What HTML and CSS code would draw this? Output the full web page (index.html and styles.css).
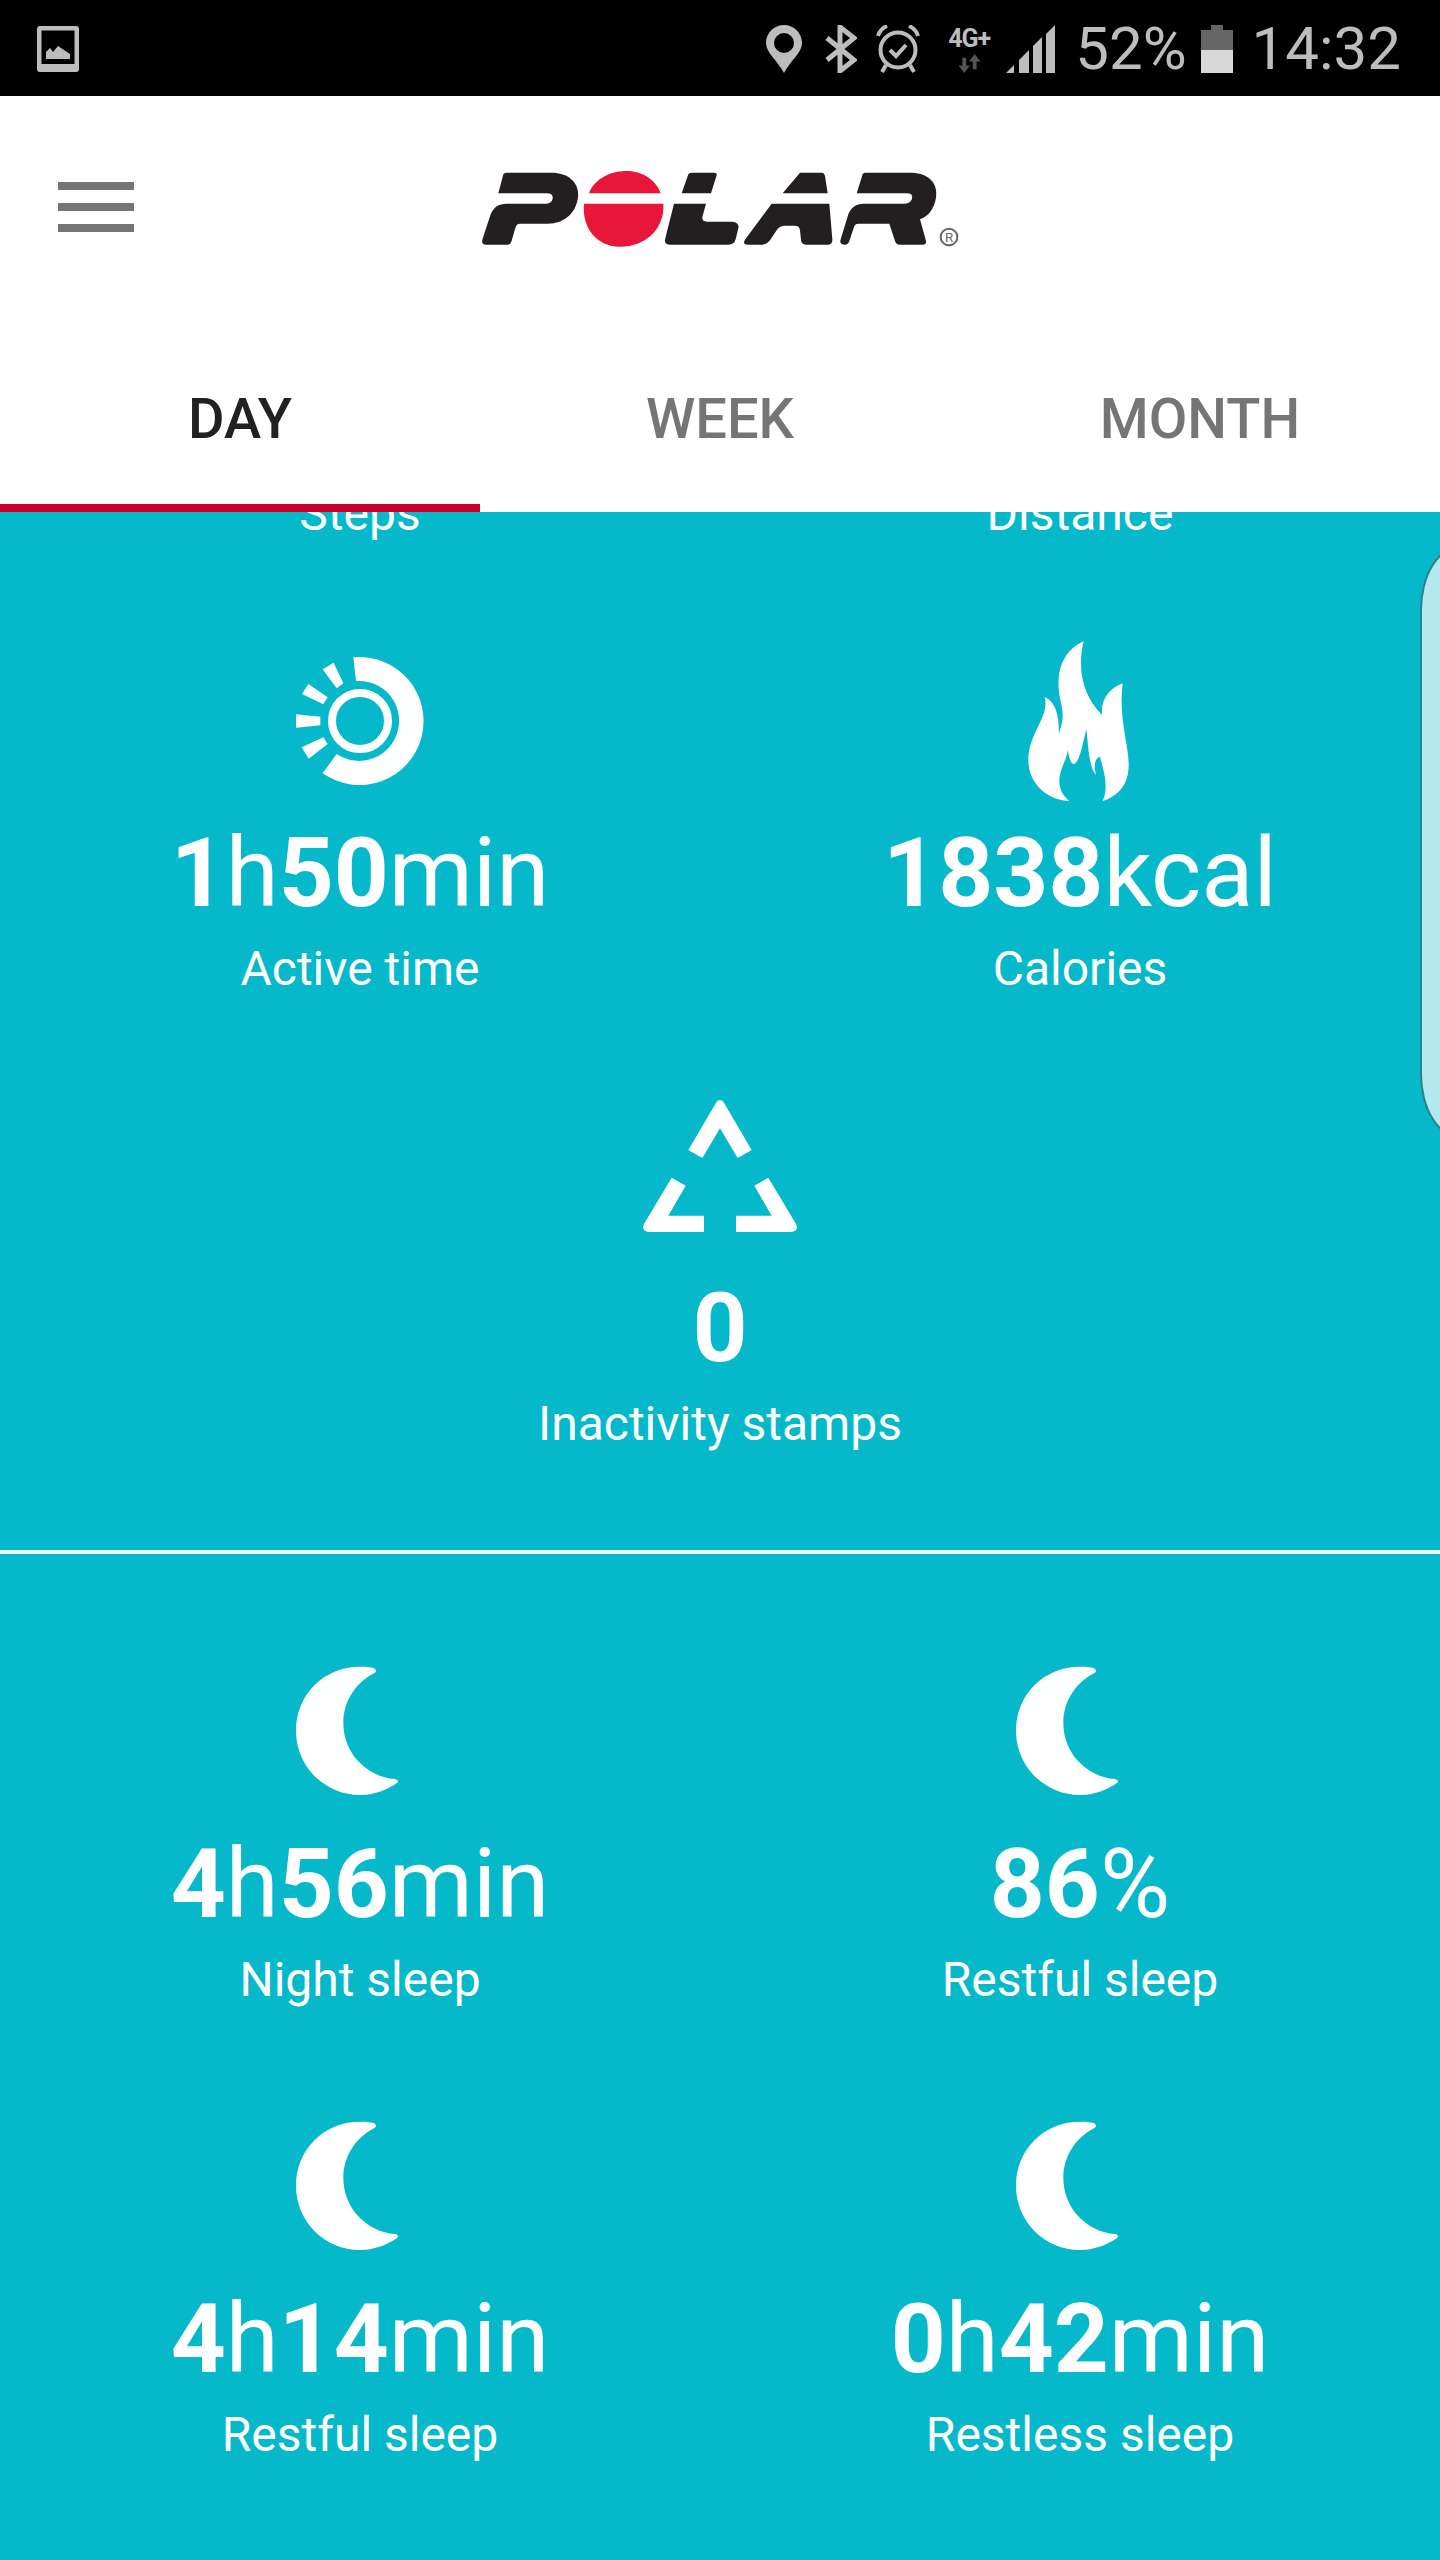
FILE: index.html
```html
<!DOCTYPE html>
<html lang="en">

<head>
    <meta charset="UTF-8">
    <title>Polar Flow</title>
    <link rel="stylesheet" href="styles.css">
</head>

<body>
    <div class="phone">
        <!-- status bar -->
        <div class="status">
            <svg class="st-photo" viewBox="0 0 42 46">
                <path fill-rule="evenodd" d="M3 0H39Q42 0 42 3V43Q42 46 39 46H3Q0 46 0 43V3Q0 0 3 0ZM4.500 4.500V38H37.500V4.500ZM9 33V26L13 22L16 26L21 20L33 28V33Z" />
            </svg>
            <div class="st-right">
                <svg class="st-pin" viewBox="0 0 36 48">
                    <path fill-rule="evenodd" d="M18 0C8 0 0 8 0 18C0 28 12 36 18 48C24 36 36 28 36 18C36 8 28 0 18 0ZM18 8A10 10 0 1 1 18 28A10 10 0 1 1 18 8Z" />
                </svg>
                <svg class="st-bt" viewBox="0 0 32 48">
                    <polyline points="2,13 29,35 15,46 15,2 29,13 2,35" />
                </svg>
                <svg class="st-alarm" viewBox="0 0 44 48">
                    <circle cx="22" cy="25" r="17.500" />
                    <polyline points="14,25 20,31 30,20" />
                    <path d="M2 11Q4 4 11 1M42 11Q40 4 33 1M10 40L6 47M34 40L38 47" />
                </svg>
                <div class="st-net">
                    <span class="st-4g">4G+</span>
                    <svg class="st-arrows" viewBox="0 0 26 20">
                        <path d="M6 4H10V12H14L8 20L2 12H6Z M17 16H21V8H25L19 0L13 8H17Z" />
                    </svg>
                </div>
                <svg class="st-signal" viewBox="0 0 49 48">
                    <path d="M0 48L8 40V48ZM13 35L23 25V48H13ZM27 21L36 12V48H27ZM40 9L49 0V48H40Z" />
                </svg>
                <span class="st-text">52%</span>
                <svg class="st-batt" viewBox="0 0 32 48">
                    <path class="batt-empty" d="M10 0H22V5H32V25H0V5H10Z" />
                    <rect class="batt-full" x="0" y="25" width="32" height="23" />
                </svg>
                <span class="st-text st-clock">14:32</span>
            </div>
        </div>

        <!-- toolbar -->
        <div class="toolbar">
            <div class="burger"><i></i><i></i><i></i></div>
            <svg class="logo" viewBox="0 0 1500 330" role="img" aria-label="Polar">
                <g class="logo-black">
                    <path d="M100 70Q102 65 110 65H245C300 65 332 100 323 145C315 190 280 218 235 218H150Q140 218 137 228L124 272Q121 281 112 281H48Q33 281 37 266L62 190C70 170 85 158 110 158H225Q245 158 248 143Q250 127 230 127H85Z" />
                    <path d="M655 70Q657 65 665 65H732Q742 65 740 73L723 127H635ZM612 158H708L697 198Q695 212 712 212H785Q808 212 805 232L797 265Q793 281 775 281H600Q580 281 586 262Z" />
                    <path d="M990 65H1055Q1063 65 1065 75L1073 127H938ZM905 158H1078L1087 265Q1088 281 1072 281H1008Q995 281 993 268L990 238Q989 224 975 224H945Q930 224 922 235L900 268Q890 281 875 281H835Q815 281 826 265Z" />
                    <path d="M1185 65H1320C1375 65 1405 95 1398 140C1392 175 1375 195 1350 205L1368 270Q1370 281 1358 281H1290Q1278 281 1275 270L1258 218H1165Q1155 218 1152 228L1138 270Q1135 281 1125 281Q1105 281 1113 262L1135 190C1142 170 1160 158 1180 158H1300Q1322 158 1326 143Q1330 127 1310 127H1160L1178 70Q1180 65 1185 65Z" />
                </g>
                <path class="logo-red" d="M357 127C372 85 420 60 470 60C520 60 560 90 572 127ZM342 158H580C585 230 530 287 450 287C380 287 335 230 342 158Z" />
                <circle class="logo-ring" cx="1437" cy="258" r="25" />
                <text class="logo-r" x="1437" y="272" text-anchor="middle">R</text>
            </svg>
        </div>

        <!-- tabs -->
        <div class="tabs">
            <div class="tab current">DAY</div>
            <div class="tab">WEEK</div>
            <div class="tab">MONTH</div>
        </div>

        <div class="content">
            <div class="grid peek">
                <div class="stat"><div class="label">Steps</div></div>
                <div class="stat"><div class="label">Distance</div></div>
            </div>

            <div class="grid">
                <div class="stat">
                    <svg class="icon" viewBox="0 0 600 570">
                        <path d="M280 112A192 192 0 1 1 188 460L230 402A120 120 0 1 0 288 183Z" />
                        <circle class="ring" cx="300" cy="303" r="84" />
                        <polygon points="188,148 221,128 250,190 230,205" />
                        <polygon points="145,192 126,222 190,253 203,232" />
                        <polygon points="108,283 108,323 181,316 181,290" />
                        <polygon points="125,382 146,416 203,372 190,352" />
                    </svg>
                    <div class="value"><b>1</b>h<b>50</b>min</div>
                    <div class="label">Active time</div>
                </div>
                <div class="stat">
                    <svg class="icon" viewBox="0 0 600 570">
                        <path d="M311 63C255 90 232 140 236 205C238 250 262 280 236 341C238 290 228 245 194 231C210 290 145 340 145 420C145 490 200 540 268 543C240 520 232 490 242 455C250 430 262 410 263 390C268 415 272 432 283 432C300 425 308 370 319 328C325 370 325 440 348 465C342 440 342 415 360 410C370 450 388 500 368 543C420 525 447 490 446 430C445 370 415 290 428 190C390 205 362 235 366 284C310 230 290 150 311 63Z" />
                    </svg>
                    <div class="value"><b>1838</b>kcal</div>
                    <div class="label">Calories</div>
                </div>
            </div>

            <div class="stat">
                <svg class="icon" viewBox="0 -15 600 570">
                    <path d="M205 210L290 65Q300 55 310 65L395 210L353 234L300 145L247 234Z" />
                    <path d="M155 293L197 317L145 407H252V456H85Q62 452 72 432Z" />
                    <path d="M445 293L403 317L455 407H348V456H515Q538 452 528 432Z" />
                </svg>
                <div class="value"><b>0</b></div>
                <div class="label">Inactivity stamps</div>
            </div>

            <div class="divider"></div>

            <div class="grid">
                <div class="stat">
                    <svg class="icon" viewBox="-30 -57 600 570">
                        <path id="moon" d="M312 55C300 50 280 50 270 50C160 50 78 135 78 242C78 350 165 435 270 435C310 435 350 420 382 398Q388 390 375 387C290 380 220 310 220 218C220 150 260 95 315 68Q322 60 312 55Z" />
                    </svg>
                    <div class="value"><b>4</b>h<b>56</b>min</div>
                    <div class="label">Night sleep</div>
                </div>
                <div class="stat">
                    <svg class="icon" viewBox="-30 -57 600 570"><use href="#moon" /></svg>
                    <div class="value"><b>86</b>%</div>
                    <div class="label">Restful sleep</div>
                </div>
                <div class="stat">
                    <svg class="icon" viewBox="-30 -57 600 570"><use href="#moon" /></svg>
                    <div class="value"><b>4</b>h<b>14</b>min</div>
                    <div class="label">Restful sleep</div>
                </div>
                <div class="stat">
                    <svg class="icon" viewBox="-30 -57 600 570"><use href="#moon" /></svg>
                    <div class="value"><b>0</b>h<b>42</b>min</div>
                    <div class="label">Restless sleep</div>
                </div>
            </div>

            <!-- peek of the side drawer -->
            <div class="handle"></div>
        </div>
    </div>
</body>

</html>
```

FILE: styles.css
```css
* {
    padding: 0;
    margin: 0;
    box-sizing: border-box;
}

body {
    background: #fff;
    font-family: Roboto, "Liberation Sans", sans-serif;
}

.phone {
    width: 1440px;
    height: 2560px;
    display: flex;
    flex-direction: column;
    overflow: hidden;
}

/* status bar */
.status {
    height: 96px;
    background: #000;
    display: flex;
    justify-content: space-between;
    align-items: center;
    padding: 2px 39px 0 37px;
    fill: #bdbdbd;
    color: #bdbdbd;
}

.st-photo {
    width: 42px;
    height: 46px;
}

.st-right {
    display: flex;
    align-items: center;
}

.st-pin {
    width: 36px;
    height: 48px;
}

.st-bt {
    width: 32px;
    height: 48px;
    margin-left: 23px;
    fill: none;
    stroke: #bdbdbd;
    stroke-width: 5;
}

.st-alarm {
    width: 44px;
    height: 48px;
    margin-left: 19px;
    fill: none;
    stroke: #bdbdbd;
    stroke-width: 4;
}

.st-net {
    width: 50px;
    height: 48px;
    margin-left: 24px;
    display: flex;
    flex-direction: column;
    align-items: center;
}

.st-4g {
    font-size: 25px;
    font-weight: 700;
    line-height: 28px;
    letter-spacing: -1px;
}

.st-arrows {
    width: 28px;
    height: 19px;
    margin-top: 1px;
    fill: #555;
}

.st-signal {
    width: 49px;
    height: 48px;
    margin-left: 12px;
}

.st-text {
    font-size: 60px;
    font-weight: 400;
    line-height: 60px;
    margin-left: 20px;
}

.st-batt {
    width: 32px;
    height: 48px;
    margin-left: 14px;
}

.batt-empty {
    fill: #666;
}

.batt-full {
    fill: #d8d8d8;
}

.st-clock {
    margin-left: 19px;
}

/* toolbar */
.toolbar {
    height: 220px;
    background: #fff;
    display: flex;
    align-items: center;
    justify-content: center;
    position: relative;
}

.burger {
    position: absolute;
    left: 58px;
    top: 86px;
    width: 76px;
    display: flex;
    flex-direction: column;
    gap: 13px;
}

.burger i {
    display: block;
    height: 8px;
    background: #757575;
}

.logo {
    width: 500px;
    height: 110px;
}

.logo-black {
    fill: #231f20;
}

.logo-red {
    fill: #e8173a;
}

.logo-ring {
    fill: none;
    stroke: #666;
    stroke-width: 6;
}

.logo-r {
    font-size: 40px;
    fill: #666;
}

/* tabs */
.tabs {
    height: 196px;
    background: #fff;
    display: grid;
    grid-template-columns: repeat(3, 480px);
}

.tab {
    padding-top: 67px;
    text-align: center;
    font-size: 56px;
    font-weight: 500;
    line-height: 72px;
    color: #757575;
}

.tab.current {
    color: #212121;
    border-bottom: 8px solid #c8002a;
}

/* stats */
.content {
    flex: 1;
    background: #05b9cb;
    color: #fff;
    fill: #fff;
    overflow: hidden;
    position: relative;
}

.grid {
    display: grid;
    grid-template-columns: 720px 720px;
}

.peek {
    height: 135px;
    margin-top: -27px;
}

.stat {
    height: 455px;
    display: flex;
    flex-direction: column;
    align-items: center;
    text-align: center;
}

.peek .stat {
    height: auto;
}

.icon {
    width: 200px;
    height: 190px;
    flex: none;
}

.ring {
    fill: none;
    stroke: #fff;
    stroke-width: 24;
}

.value {
    margin-top: 7px;
    font-size: 96px;
    line-height: 112px;
}

.value b {
    font-weight: 700;
}

.label {
    margin-top: 12px;
    font-size: 48px;
    line-height: 56px;
}

.peek .label {
    margin-top: 1px;
}

.divider {
    height: 4px;
    margin: 20px 0 77px;
    background: #eef6f7;
}

.handle {
    position: absolute;
    top: 34px;
    right: -64px;
    width: 84px;
    height: 592px;
    background: #b5e9f0;
    border: 2px solid #2d7f8b;
    border-radius: 40px / 64px;
}
```
